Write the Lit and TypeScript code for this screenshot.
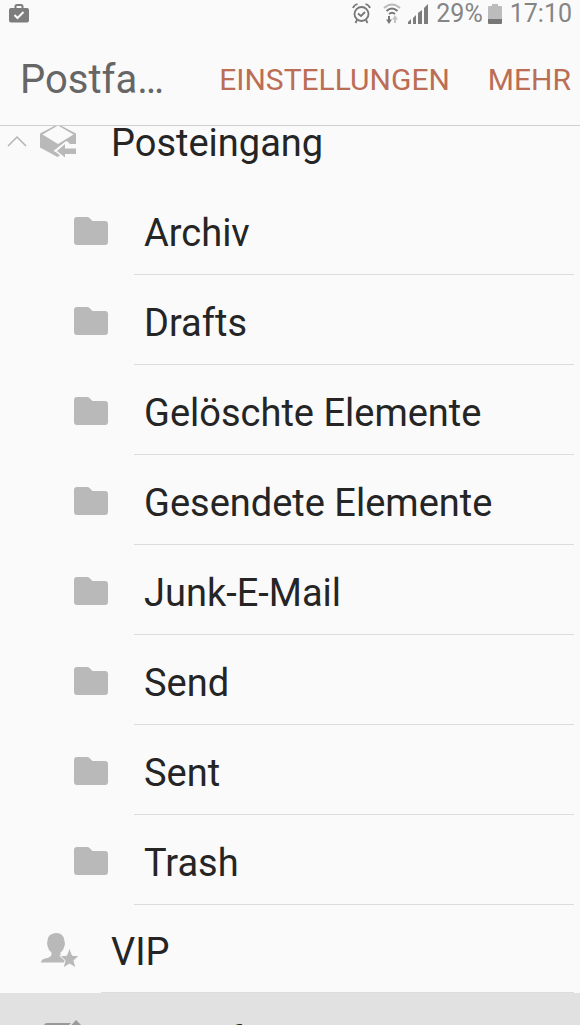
import { LitElement, html, css, svg } from "lit";
import { customElement, property } from "lit/decorators.js";

const folderIcon = html`<svg width="34" height="28" viewBox="0 0 34 28" aria-hidden="true">
  <path fill="#b9b9b9" d="M3 0H13Q14.500 0 15.500 1L18.500 4H31Q34 4 34 7V25Q34 28 31 28H3Q0 28 0 25V3Q0 0 3 0Z" />
</svg>`;

const inboxIcon = html`<svg width="36" height="34" viewBox="0 0 36 34" aria-hidden="true">
  <path fill="#b9b9b9" d="M0 9.500 18 0 36 9.500V20H30L27 17 14.500 26.500 20 31.500 17.500 33 0 23.500Z" />
  <path fill="#fafafa" d="M2.500 10.500 18 1.500 33.500 10.500 18 20Z" />
  <path fill="#fafafa" d="M13.500 27 26 17V22H36V33H26Z" />
  <path fill="#b9b9b9" d="M17 27 25 20V24.500H36V30H25V33.500Z" />
</svg>`;

const vipIcon = html`<svg width="39" height="36" viewBox="0 0 39 36" aria-hidden="true">
  <path fill="#b9b9b9" d="M15.500 1C20.500 .5 24.500 4 24.500 9.500Q25.500 11 24.500 14Q23 19 20.500 20.500V22.500Q21 25 25 26L26 30.500H1Q1 27.500 5 26.500Q11 25.500 11.500 22.500V20.500Q8.500 18.500 7.500 14Q6.500 11 7.500 9Q7.500 2 15.500 1Z" />
  <path fill="#b9b9b9" stroke="#fafafa" stroke-width="1" d="M29.500 16 32.400 23.300 39.200 23.800 33.900 28.500 36 36 29.500 32 23 36 25.100 28.500 19.800 23.800 26.600 23.300Z" />
</svg>`;

const draftIcon = html`<svg width="38" height="40" viewBox="0 0 38 40" aria-hidden="true">
  <path fill="#999" d="M4 3H28L23 8H6V34H28V19L33 14V36Q33 39 30 39H4Q1 39 1 36V6Q1 3 4 3Z" />
  <path fill="#999" d="M33 0 38 5 20 24 14 26 16 19Z" />
</svg>`;

const chevronIcon = html`<svg width="20" height="12" viewBox="0 0 20 12" aria-hidden="true">
  <path d="M1 11 10 2 19 11" fill="none" stroke="#b4b4b4" stroke-width="1.500" />
</svg>`;

const workIcon = html`<svg width="20" height="19" viewBox="0 0 20 19" aria-hidden="true">
  <path fill="#7d7d7d" fill-rule="evenodd" d="M5.500 4V2.500Q5.500 0 8 0H12Q14.500 0 14.500 2.500V4H18Q20 4 20 6V16.500Q20 18.500 18 18.500H2Q0 18.500 0 16.500V6Q0 4 2 4ZM7.500 4H12.500V2.500Q12.500 2 12 2H8Q7.500 2 7.500 2.500Z" />
  <path d="M5.500 11 8.500 14 14.500 8" fill="none" stroke="#fafafa" stroke-width="2" />
</svg>`;

const alarmIcon = html`<svg width="19" height="21" viewBox="0 0 19 21" aria-hidden="true">
  <g fill="none" stroke="#777" stroke-width="1.800">
    <circle cx="9.500" cy="11" r="7" />
    <path d="M6 10.500 9 13 13 9M1 5Q2 2 5.500 1M18 5Q17 2 13.500 1M5 17 3.500 20M14 17 15.500 20" />
  </g>
</svg>`;

const wifiIcon = html`<svg width="18" height="21" viewBox="0 0 18 21" aria-hidden="true">
  <g fill="none" stroke-width="2">
    <path stroke="#bbb" d="M1 5Q9-2 17 5" />
    <path stroke="#777" d="M3.500 8Q9 3 14.500 8M6 11Q9 8.500 12 11" />
    <path stroke="#777" d="M6 13V18" />
    <path stroke="#c4c4c4" d="M12 20V15" />
  </g>
  <path fill="#777" d="M3 16.500H9L6 21Z" />
  <path fill="#c4c4c4" d="M9 16.500H15L12 12Z" />
</svg>`;

const signalBars = ["M0 20V18L3 15V20Z", "M5 20V14L8 11V20Z", "M10 20V9L14 6V20Z", "M16 20V4L20 0V20Z"];

const signalIcon = html`<svg width="21" height="20" viewBox="0 0 21 20" aria-hidden="true">
  ${signalBars.map((d) => svg`<path d=${d} fill="#7d7d7d" />`)}
</svg>`;

const batteryIcon = html`<svg width="14" height="20" viewBox="0 0 14 20" aria-hidden="true">
  <path fill="#bcbcbc" d="M4 0H10V2H13Q14 2 14 3V15H0V3Q0 2 1 2H4Z" />
  <path fill="#777" d="M0 15H14V19Q14 20 13 20H1Q0 20 0 19Z" />
</svg>`;

@customElement("status-bar")
class StatusBar extends LitElement {
  static styles = css`
    :host {
      display: flex;
      align-items: flex-start;
      justify-content: space-between;
      height: 30px;
      padding: 0 8px 0 9px;
      color: #858585;
      font-size: 25px;
      line-height: 30px;
    }
    svg {
      display: block;
      flex: none;
    }
    .side {
      display: flex;
      align-items: center;
      height: 27px;
    }
    .text {
      height: 30px;
    }
    .alarm {
      margin-right: 12px;
    }
    .wifi,
    .signal {
      margin-right: 7px;
    }
    .battery {
      margin: 0 8px 0 5px;
    }
  `;
  render() {
    return html`
      <div class="side">${workIcon}</div>
      <div class="side">
        <span class="alarm">${alarmIcon}</span>
        <span class="wifi">${wifiIcon}</span>
        <span class="signal">${signalIcon}</span>
        <span class="text">29%</span>
        <span class="battery">${batteryIcon}</span>
        <time class="text">17:10</time>
      </div>
    `;
  }
}

@customElement("folder-row")
class FolderRow extends LitElement {
  @property() label = "";
  @property() kind = "folder";

  static styles = css`
    :host {
      display: block;
    }
    .row {
      display: flex;
      width: 100%;
      height: 90px;
      margin: 0;
      padding: 0 6px 0 0;
      border: 0;
      background: none;
      color: #252525;
      font: inherit;
      font-size: 38px;
      line-height: 44px;
      text-align: left;
      cursor: pointer;
    }
    .lead {
      display: flex;
      align-items: center;
      flex: none;
      box-sizing: border-box;
      width: 101px;
      padding: 2px 0 0 7px;
      gap: 13px;
    }
    .chevron {
      width: 20px;
    }
    svg {
      display: block;
    }
    .folder .lead {
      width: 134px;
      padding-left: 74px;
    }
    .name {
      display: flex;
      align-items: center;
      flex: 1;
      min-width: 0;
      padding: 6px 0 0 10px;
      border-bottom: 1px solid #dcdcdc;
      white-space: nowrap;
    }
    .inbox .name {
      border-bottom-color: transparent;
    }
    .vip {
      height: 88px;
    }
    .drafts {
      background: #e1e1e1;
    }
    .drafts .lead {
      padding: 4px 0 0 10px;
    }
  `;
  render() {
    const icons: Record<string, unknown> = {
      folder: folderIcon,
      inbox: inboxIcon,
      vip: vipIcon,
      drafts: draftIcon,
    };
    return html`
      <button class="row ${this.kind}" type="button">
        <span class="lead">
          ${this.kind === "folder"
            ? null
            : html`<span class="chevron">${this.kind === "inbox" ? chevronIcon : null}</span>`}
          ${icons[this.kind]}
        </span>
        <span class="name">${this.label}</span>
      </button>
    `;
  }
}

@customElement("app-root")
class AppRoot extends LitElement {
  private folders = [
    "Archiv",
    "Drafts",
    "Gelöschte Elemente",
    "Gesendete Elemente",
    "Junk-E-Mail",
    "Send",
    "Sent",
    "Trash",
  ];

  static styles = css`
    :host {
      display: flex;
      flex-direction: column;
      height: 100vh;
      overflow: hidden;
      background: #fafafa;
      font-family: Roboto, sans-serif;
    }
    .bar {
      display: flex;
      align-items: center;
      flex: none;
      height: 95px;
      padding: 0 9px 0 20px;
      border-bottom: 1px solid #cfcfcf;
    }
    .title {
      flex: 1;
      margin: 0;
      padding-top: 4px;
      color: #666;
      font-size: 40px;
      font-weight: 400;
      line-height: 46px;
      white-space: nowrap;
    }
    .actions {
      display: flex;
      gap: 38px;
      padding-top: 4px;
    }
    .action {
      padding: 0;
      border: 0;
      background: none;
      color: #bb6d55;
      font: inherit;
      font-size: 30px;
      line-height: 36px;
      cursor: pointer;
    }
    .list {
      flex: 1;
      min-height: 0;
      overflow: hidden;
    }
    .first {
      margin-top: -31px;
    }
  `;
  render() {
    return html`
      <status-bar></status-bar>
      <header class="bar">
        <h1 class="title">Postfa…</h1>
        <div class="actions">
          <button class="action" type="button">EINSTELLUNGEN</button>
          <button class="action" type="button">MEHR</button>
        </div>
      </header>
      <nav class="list" aria-label="Postfächer">
        <folder-row class="first" kind="inbox" label="Posteingang"></folder-row>
        ${this.folders.map((name) => html`<folder-row label=${name}></folder-row>`)}
        <folder-row kind="vip" label="VIP"></folder-row>
        <folder-row kind="drafts" label="Entwürfe"></folder-row>
      </nav>
    `;
  }
}
